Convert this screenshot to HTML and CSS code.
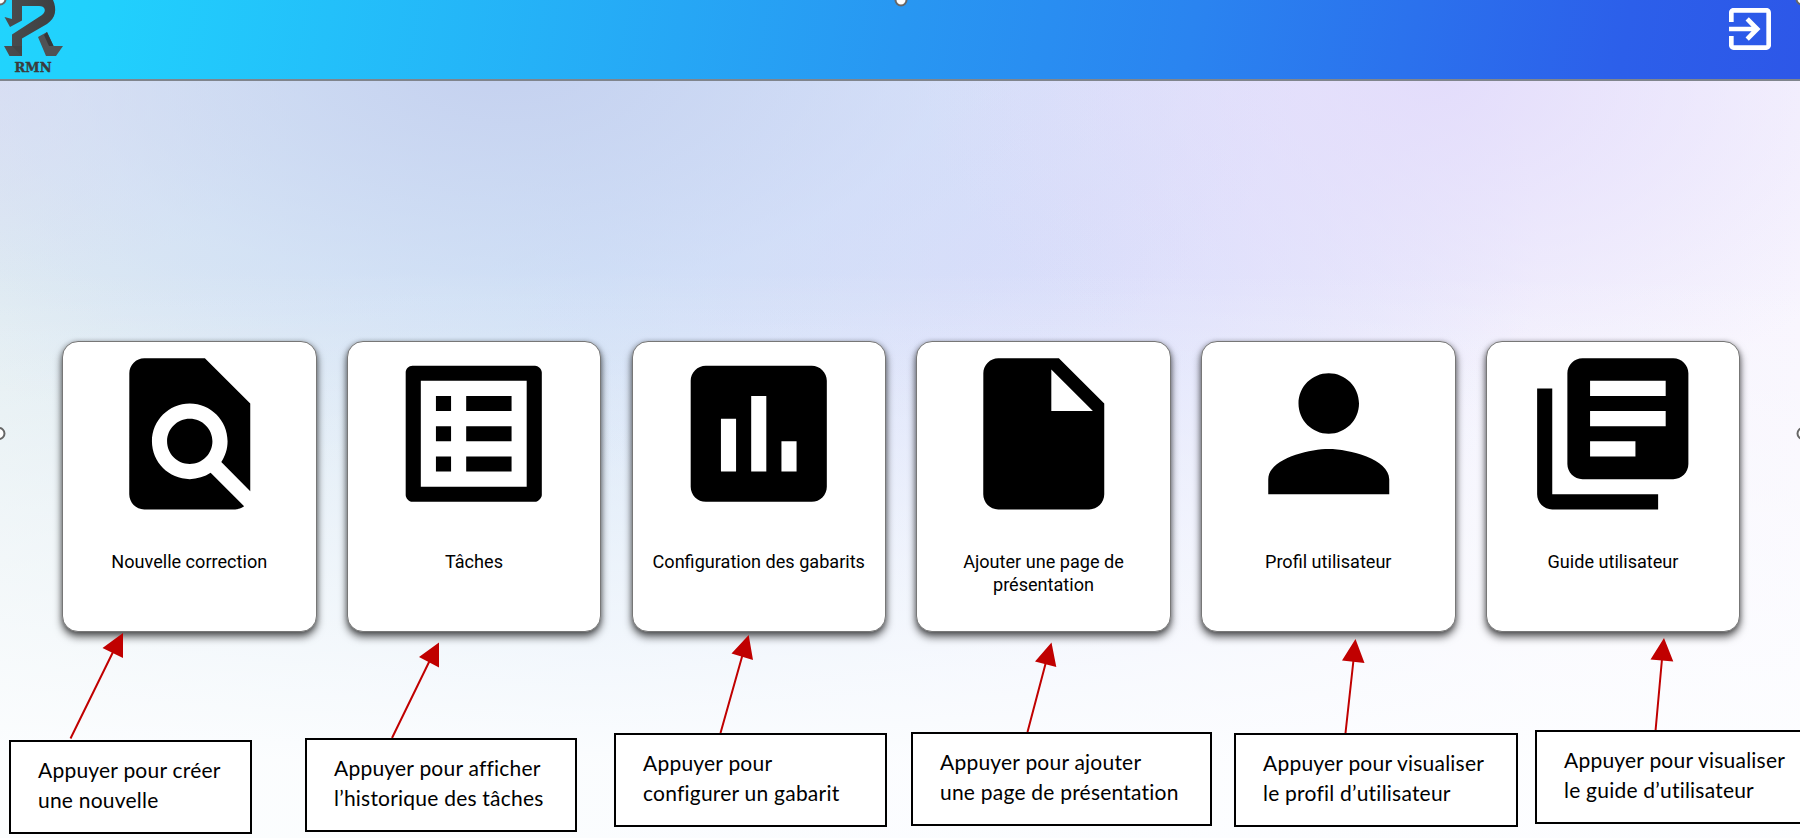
FILE: index.html
```html
<!DOCTYPE html>
<html lang="fr">
<head>
<meta charset="utf-8">
<title>RMN</title>
<link rel="stylesheet" href="styles.css">
</head>
<body>
<header class="topbar">
  <div class="brand">
    <svg class="brand-mark" width="66" height="58" viewBox="0 0 66 58">
      <defs><linearGradient id="leg" x1="0" x2="1"><stop offset="0" stop-color="#4b4d4f"/><stop offset="1" stop-color="#3e3f40"/></linearGradient></defs>
      <path d="M12 0V19L4.500 17L10 27L22 20.500V6H39C45 6 47 11 42 15L12 34.500V46H4L9.500 56H22V38.500L47 24C56 18 57 9 53 0Z" fill="url(#leg)"/>
      <path d="M38 37L47 32L53.500 46H63L56 56H46Z" fill="#505254"/>
      <path d="M47 32L53.500 46H49L44 35Z" fill="#363738"/>
      <path d="M12 46H22V56Z" fill="#434445"/>
    </svg>
    <span class="brand-name">RMN</span>
  </div>
  <svg class="logout" width="56" height="56" viewBox="0 0 24 24"><path fill="#fff" d="M10.090 15.590L11.500 17l5-5-5-5-1.410 1.410L12.670 11H3v2h9.670l-2.580 2.590zM19 3H5c-1.110 0-2 .9-2 2v4h2V5h14v14H5v-4H3v4c0 1.100.89 2 2 2h14c1.100 0 2-.9 2-2V5c0-1.100-.9-2-2-2z"/></svg>
</header>
<main class="stage">
  <nav class="cards">
    <a class="card">
      <svg class="icon" viewBox="0 0 24 24"><path d="M20 19.590V8l-6-6H6c-1.100 0-1.990.9-1.990 2L4 20c0 1.100.89 2 1.990 2H18c.45 0 .85-.15 1.190-.4l-4.430-4.430c-.8.520-1.740.83-2.760.83-2.760 0-5-2.240-5-5s2.240-5 5-5 5 2.240 5 5c0 1.020-.31 1.960-.83 2.750L20 19.590zM9 13c0 1.660 1.340 3 3 3s3-1.340 3-3-1.340-3-3-3-3 1.340-3 3z"/></svg>
      <span class="label">Nouvelle correction</span>
    </a>
    <a class="card">
      <svg class="icon" viewBox="0 0 24 24"><path d="M19 5v14H5V5h14m1.100-2H3.900c-.5 0-.9.4-.9.900v16.200c0 .4.400.900.900.900h16.200c.4 0 .9-.5.900-.9V3.900c0-.5-.5-.9-.9-.9zM11 7h6v2h-6V7zm0 4h6v2h-6v-2zm0 4h6v2h-6zM7 7h2v2H7zm0 4h2v2H7zm0 4h2v2H7z"/></svg>
      <span class="label">Tâches</span>
    </a>
    <a class="card">
      <svg class="icon" viewBox="0 0 24 24"><path d="M19 3H5c-1.100 0-2 .9-2 2v14c0 1.100.9 2 2 2h14c1.100 0 2-.9 2-2V5c0-1.100-.9-2-2-2zM9 17H7v-7h2v7zm4 0h-2V7h2v10zm4 0h-2v-4h2v4z"/></svg>
      <span class="label">Configuration des gabarits</span>
    </a>
    <a class="card">
      <svg class="icon" viewBox="0 0 24 24"><path d="M6 2c-1.100 0-1.990.9-1.990 2L4 20c0 1.100.89 2 1.990 2H18c1.100 0 2-.9 2-2V8l-6-6H6zm7 7V3.500L18.500 9H13z"/></svg>
      <span class="label">Ajouter une page de présentation</span>
    </a>
    <a class="card">
      <svg class="icon" viewBox="0 0 24 24"><path d="M12 12c2.210 0 4-1.790 4-4s-1.790-4-4-4-4 1.790-4 4 1.790 4 4 4zm0 2c-2.670 0-8 1.340-8 4v2h16v-2c0-2.660-5.330-4-8-4z"/></svg>
      <span class="label">Profil utilisateur</span>
    </a>
    <a class="card">
      <svg class="icon" viewBox="0 0 24 24"><path d="M4 6H2v14c0 1.100.9 2 2 2h14v-2H4V6zm16-4H8c-1.100 0-2 .9-2 2v12c0 1.100.9 2 2 2h12c1.100 0 2-.9 2-2V4c0-1.100-.9-2-2-2zm-5 13H9v-2h6v2zm4-4H9V9h10v2zm0-4H9V5h10v2z"/></svg>
      <span class="label">Guide utilisateur</span>
    </a>
  </nav>
</main>

<!-- Annotations laid over the screen -->
<svg class="arrows" width="1800" height="838" viewBox="0 0 1800 838">
  <g stroke="#c00000" stroke-width="2">
    <path d="M70.500 738.500L114 650M392 738L431 658M720.500 733L742.500 655M1027.500 732L1046 662M1345.500 733L1353.500 660M1655.500 731L1662 659"/>
  </g>
  <g fill="#c00000">
    <path d="M123 633L102.500 648L123 658ZM439 642.500L419 657L439 667.500ZM748.700 635L731.500 653.500L753 660ZM1051.500 642.500L1035 661.500L1056.300 667ZM1355.500 639L1342 660.500L1364.500 663ZM1664 638L1650.500 659.500L1673.300 661.500Z"/>
  </g>
  <g fill="#fff" stroke="#666" stroke-width="2">
    <circle cx="0" cy="-1" r="5.500"/><circle cx="901" cy="0" r="5.500"/><circle cx="1802" cy="-1" r="5.500"/>
    <circle cx="-1" cy="433.500" r="5.500"/><circle cx="1803" cy="433.500" r="5.500"/>
  </g>
</svg>
<p class="note n1">Appuyer pour créer<br>une nouvelle</p>
<p class="note n2">Appuyer pour afficher<br>l’historique des tâches</p>
<p class="note n3">Appuyer pour<br>configurer un gabarit</p>
<p class="note n4">Appuyer pour ajouter<br>une page de présentation</p>
<p class="note n5">Appuyer pour visualiser<br>le profil d’utilisateur</p>
<p class="note n6">Appuyer pour visualiser<br>le guide d’utilisateur</p>
</body>
</html>
```
FILE: styles.css
```css
* { box-sizing: border-box; }
body {
  margin: 0;
  width: 1800px;
  height: 838px;
  overflow: hidden;
  position: relative;
  display: flex;
  flex-direction: column;
  font-family: Roboto, sans-serif;
  color: #000;
}
.topbar {
  height: 81px;
  flex: none;
  display: flex;
  justify-content: space-between;
  align-items: flex-start;
  border-bottom: 2px solid #80858d;
  background: linear-gradient(100deg, #21d4fd 0%, #21d0fd 6%, #2897f2 50%, #2a84f0 66%, #2c5fea 90%, #2d57e8 100%);
}
.brand { width: 66px; display: flex; flex-direction: column; align-items: center; }
.brand-mark { display: block; }
.brand-name {
  font: 900 13px/14px "DejaVu Serif", serif;
  color: #3a3b3c;
  -webkit-text-stroke: .4px #3a3b3c;
  margin-top: 3px;
}
.logout { margin: 1px 22.500px 0 0; }
.stage {
  flex: 1;
  padding: 260px 0 0 62px;
  background:
    linear-gradient(180deg, rgba(253,254,255,0) 25%, rgba(253,254,255,.55) 60%, rgba(253,254,255,.95) 90%),
    radial-gradient(ellipse 520px 330px at 1440px 0, rgba(226,219,251,.9), rgba(226,219,251,0)),
    radial-gradient(ellipse 800px 420px at 500px -20px, rgba(196,208,239,.95), rgba(205,220,247,.5) 55%, rgba(210,226,248,0)),
    radial-gradient(ellipse 520px 420px at 1020px 170px, rgba(217,219,251,.75), rgba(225,225,252,0)),
    radial-gradient(ellipse 300px 200px at 0 0, rgba(222,222,240,.9), rgba(222,222,240,0)),
    linear-gradient(90deg, #e2edf1 0%, #d1e2f5 33%, #e3e8fb 62%, #f4f2fd 85%, #f8f5fe 100%);
}
.cards { display: flex; gap: 30.250px; }
.card {
  width: 254.500px;
  height: 291px;
  flex: none;
  display: flex;
  flex-direction: column;
  align-items: center;
  background: #fff;
  border: 1px solid #777;
  border-radius: 16px;
  box-shadow: 0 5px 8px rgba(0,0,0,.6), 0 1px 5px rgba(0,0,0,.3);
}
.icon { width: 181.500px; height: 181.500px; display: block; flex: none; margin-top: 1px; }
.label {
  margin-top: 26.500px;
  width: 222px;
  text-align: center;
  font-size: 18.100px;
  line-height: 22.600px;
}
.arrows { position: absolute; left: 0; top: 0; }
.note {
  position: absolute;
  margin: 0;
  height: 94px;
  padding: 13px 0 0 27px;
  border: 2px solid #000;
  background: #fff;
  font-family: Lato, sans-serif;
  font-size: 21px;
  letter-spacing: .22px;
  line-height: 30.200px;
  white-space: nowrap;
}
.n1 { left: 9px; top: 740px; width: 243px; }
.n2 { left: 305px; top: 738px; width: 272px; }
.n3 { left: 614px; top: 733px; width: 273px; }
.n4 { left: 911px; top: 732px; width: 301px; }
.n5 { left: 1234px; top: 733px; width: 284px; }
.n6 { left: 1535px; top: 730px; width: 284px; }
```
